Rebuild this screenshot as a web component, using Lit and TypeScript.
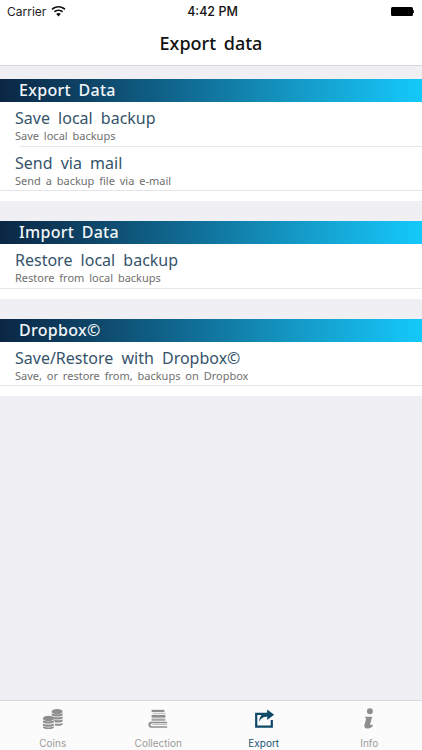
import { LitElement, html, css, svg } from "lit";
import { customElement } from "lit/decorators.js";

const sections = [
  { title: "Export Data", rows: [["Save local backup", "Save local backups"], ["Send via mail", "Send a backup file via e-mail"]] },
  { title: "Import Data", rows: [["Restore local backup", "Restore from local backups"]] },
  { title: "Dropbox©", rows: [["Save/Restore with Dropbox©", "Save, or restore from, backups on Dropbox"]] },
];

const coins = svg`<svg width="22" height="22" viewBox="0 0 24 24" fill="#8e8e8e">
  <g><ellipse cx="16.5" cy="4" rx="6" ry="2.8"/><path d="M10.5 5.6c1 1.6 11 1.6 12 0v2.2c-1 1.9-11 1.9-12 0z"/><path d="M10.5 9c1 1.6 11 1.6 12 0v2.2c-1 1.9-11 1.9-12 0z"/><path d="M13 12.8c3 .8 7.5.6 9.5-.6v2.2c-1 1.4-5 1.7-8.5 1.1z"/><path d="M14 17c3 .5 7 .3 8.5-1v2c-1 1.4-5 1.7-8.5 1.1z"/></g>
  <g><ellipse cx="7" cy="11.5" rx="6" ry="3"/><path d="M1 13.4c1 1.6 11 1.6 12 0v2.1c-1 1.9-11 1.9-12 0z"/><path d="M1 16.8c1 1.6 11 1.6 12 0V19c-1 1.9-11 1.9-12 0z"/><path d="M1 20c1 1.6 11 1.6 12 0v1.2c-1 2.4-11 2.4-12 0z"/></g>
</svg>`;
const books = svg`<svg width="22" height="22" viewBox="0 0 24 24" fill="#8e8e8e">
  <path d="M5 2h14v2.5H5z"/><path d="M6.500 5.500h14v1H6.500z" opacity=".55"/><path d="M5 7.500h15v3H5z"/><path d="M5 11.500h15v2.500H5z" opacity=".8"/>
  <path d="M4 15h18v1.500H5.500a1.500 1.500 0 0 0 0 3.500H22v1.500H4.500C2.500 21.500 1.500 20 1.500 18.300S2.500 15 4 15z"/><path d="M6 17.300h16v1.200H6z" opacity=".6"/>
</svg>`;
const share = svg`<svg width="22" height="22" viewBox="0 0 24 24">
  <path d="M15 6.500H3.500v13.800h17V13" fill="none" stroke="#0e4a68" stroke-width="2.400"/>
  <path d="M15.500 1.500 23 7.300l-7.500 5.700V9.600c-4.200-.2-6.800 1.400-8.800 5.400.4-5.800 3.400-9.400 8.800-9.700z" fill="#0e4a68"/>
</svg>`;
const info = svg`<svg width="22" height="22" viewBox="0 0 24 24" fill="#8e8e8e">
  <circle cx="13" cy="3.600" r="3.200"/>
  <path d="M8 9.500h7.500l-2.200 8c-.3 1.200.7 1.500 2.500.6l.4 1.400c-2 1.900-4 2.800-6 2.800-2.600 0-3.800-1.500-3.100-4l1.700-6.200c.2-.9-.2-1.200-1.100-1.100z"/>
</svg>`;

@customElement("app-root")
export class AppRoot extends LitElement {
  static styles = css`
    :host { display: flex; flex-direction: column; width: 422px; height: 750px; background: #efeff4; overflow: hidden; font-family: "Noto Sans", sans-serif; }
    .top { background: #fff; border-bottom: 1px solid #d6d6da; height: 65px; flex: none; display: flex; flex-direction: column; }
    .status { height: 20px; padding-top: 1px; box-sizing: content-box; display: grid; grid-template-columns: 1fr auto 1fr; align-items: center; padding-left: 7px; padding-right: 6px; font-family: Inter, "Liberation Sans", sans-serif; font-size: 12px; color: #111; }
    .status-left { display: flex; align-items: center; gap: 5px; font-size: 12px; color: #222; }
    .time { font-weight: 500; font-size: 12.500px; padding-left: 2px; }
    .battery { justify-self: end; display: flex; align-items: center; margin-right: 2px; }
    .cell { width: 22px; height: 9px; background: #000; border-radius: 1.500px; }
    .nub { width: 1.500px; height: 3px; background: #333; }
    .title { flex: 1; display: flex; align-items: center; justify-content: center; font-size: 18px; font-weight: 500; color: #111; word-spacing: 3px; padding-bottom: 0; }
    .content { flex: 1; display: flex; flex-direction: column; padding-top: 13px; gap: 20px; }
    .head { height: 23px; display: flex; align-items: center; padding-left: 19px; padding-bottom: 1px; box-sizing: border-box; color: #f2f6f8; font-size: 16px; font-weight: 500; letter-spacing: .3px; word-spacing: 3px;
      background: linear-gradient(90deg, #0b2645 0%, #0e4365 20%, #10678f 42%, #149cc9 72%, #14c9fb 100%); }
    .rows { background: #fff; padding-bottom: 10px; }
    .row { height: 44.500px; box-sizing: border-box; display: flex; flex-direction: column; padding: 5px 0 0 15px; border-bottom: 1px solid #e6e6ea; }
    .row.inset { border-bottom: none; position: relative; }
    .row.inset::after { content: ""; position: absolute; left: 20px; right: 0; bottom: 0; height: 1px; background: #e6e6ea; }
    .main { font-size: 16px; line-height: 22px; color: #35536a; word-spacing: 4px; }
    .sub { font-size: 11px; line-height: 14px; color: #6f6f6f; word-spacing: 2px; }
    .tabs { flex: none; height: 50px; box-sizing: border-box; background: #fbfbfb; border-top: 1px solid #d8d8dc; display: grid; grid-template-columns: repeat(4, 1fr); }
    .tab { display: flex; flex-direction: column; align-items: center; padding-top: 7px; font-family: Inter, "Liberation Sans", sans-serif; font-size: 10px; color: #9a9a9a; gap: 7px; }
    .tab.on { color: #1a5573; }
    .tab svg { display: block; }
  `;

  render() {
    return html`
      <div class="top">
        <div class="status">
          <div class="status-left">Carrier
            <svg width="15" height="11" viewBox="0 0 15 11" fill="#111"><path d="M7.500 0C4.800 0 2.400 1 .5 2.800l1.100 1.200c1.600-1.500 3.600-2.400 5.900-2.400s4.300.9 5.900 2.400l1.100-1.200C12.600 1 10.200 0 7.500 0z"/><path d="M7.500 3.500c-1.800 0-3.400.7-4.600 1.800L4 6.500c.9-.8 2.200-1.400 3.500-1.400S10.100 5.700 11 6.500l1.100-1.200C10.900 4.200 9.300 3.500 7.500 3.500z"/><path d="M7.500 7c-.9 0-1.700.3-2.300.9l2.300 2.600 2.300-2.600C9.200 7.300 8.400 7 7.500 7z"/></svg>
          </div>
          <div class="time">4:42 PM</div>
          <div class="battery"><div class="cell"></div><div class="nub"></div></div>
        </div>
        <div class="title">Export data</div>
      </div>
      <div class="content">
        ${sections.map((s) => html`<section>
          <div class="head">${s.title}</div>
          <div class="rows">
            ${s.rows.map((r, i) => html`<div class="row ${i < s.rows.length - 1 ? "inset" : ""}">
              <div class="main">${r[0]}</div><div class="sub">${r[1]}</div>
            </div>`)}
          </div>
        </section>`)}
      </div>
      <div class="tabs">
        <div class="tab">${coins}<span>Coins</span></div>
        <div class="tab">${books}<span>Collection</span></div>
        <div class="tab on">${share}<span>Export</span></div>
        <div class="tab">${info}<span>Info</span></div>
      </div>
    `;
  }
}
